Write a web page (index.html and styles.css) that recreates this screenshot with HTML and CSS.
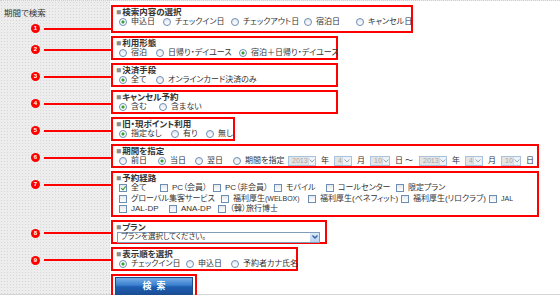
FILE: index.html
```html
<!DOCTYPE html>
<html>
<head>
<meta charset="utf-8">
<title>期間で検索</title>
<link rel="stylesheet" href="styles.css">
</head>
<body>
<div class="page">

    <div class="row">
        <div class="side side-first">
            <h2 class="side-title">期間で検索</h2>
            <span class="mark"><i>1</i></span>
        </div>
        <div class="box w-1">
            <p class="box-title">検索内容の選択</p>
            <div class="opts cols-kind">
                <label class="opt"><input type="radio" name="kind" checked>申込日</label>
                <label class="opt"><input type="radio" name="kind">チェックイン日</label>
                <label class="opt"><input type="radio" name="kind">チェックアウト日</label>
                <label class="opt"><input type="radio" name="kind">宿泊日</label>
                <label class="opt"><input type="radio" name="kind">キャンセル日</label>
            </div>
        </div>
    </div>

    <div class="row">
        <div class="side"><span class="mark"><i>2</i></span></div>
        <div class="box w-2">
            <p class="box-title">利用形態</p>
            <div class="opts cols-use">
                <label class="opt"><input type="radio" name="use">宿泊</label>
                <label class="opt"><input type="radio" name="use">日帰り・デイユース</label>
                <label class="opt"><input type="radio" name="use" checked>宿泊＋日帰り・デイユース</label>
            </div>
        </div>
    </div>

    <div class="row">
        <div class="side"><span class="mark"><i>3</i></span></div>
        <div class="box w-2">
            <p class="box-title">決済手段</p>
            <div class="opts cols-pay">
                <label class="opt"><input type="radio" name="pay" checked>全て</label>
                <label class="opt"><input type="radio" name="pay">オンラインカード決済のみ</label>
            </div>
        </div>
    </div>

    <div class="row">
        <div class="side"><span class="mark"><i>4</i></span></div>
        <div class="box w-2">
            <p class="box-title">キャンセル予約</p>
            <div class="opts cols-cancel">
                <label class="opt"><input type="radio" name="cancel" checked>含む</label>
                <label class="opt"><input type="radio" name="cancel">含まない</label>
            </div>
        </div>
    </div>

    <div class="row">
        <div class="side"><span class="mark"><i>5</i></span></div>
        <div class="box w-5">
            <p class="box-title">旧・現ポイント利用</p>
            <div class="opts cols-point">
                <label class="opt"><input type="radio" name="point" checked>指定なし</label>
                <label class="opt"><input type="radio" name="point">有り</label>
                <label class="opt"><input type="radio" name="point">無し</label>
            </div>
        </div>
    </div>

    <div class="row">
        <div class="side"><span class="mark"><i>6</i></span></div>
        <div class="box w-wide">
            <p class="box-title">期間を指定</p>
            <div class="opts cols-term">
                <label class="opt"><input type="radio" name="term">前日</label>
                <label class="opt"><input type="radio" name="term" checked>当日</label>
                <label class="opt"><input type="radio" name="term">翌日</label>
                <label class="opt"><input type="radio" name="term">期間を指定</label>
                <div class="dates">
                    <span class="sel sel-year">2013<span class="arr"><svg width="6" height="4" viewBox="0 0 6 4"><path d="M0.5 0.5 3 3 5.5 0.5" fill="none" stroke="#9aa" stroke-width="1"/></svg></span></span><span class="unit">年</span>
                    <span class="sel sel-month">4<span class="arr"><svg width="6" height="4" viewBox="0 0 6 4"><path d="M0.5 0.5 3 3 5.5 0.5" fill="none" stroke="#9aa" stroke-width="1"/></svg></span></span><span class="unit">月</span>
                    <span class="sel sel-day">10<span class="arr"><svg width="6" height="4" viewBox="0 0 6 4"><path d="M0.5 0.5 3 3 5.5 0.5" fill="none" stroke="#9aa" stroke-width="1"/></svg></span></span><span class="unit unit-day">日</span>
                    <span class="unit tilde">～</span>
                    <span class="sel sel-year">2013<span class="arr"><svg width="6" height="4" viewBox="0 0 6 4"><path d="M0.5 0.5 3 3 5.5 0.5" fill="none" stroke="#9aa" stroke-width="1"/></svg></span></span><span class="unit">年</span>
                    <span class="sel sel-month">4<span class="arr"><svg width="6" height="4" viewBox="0 0 6 4"><path d="M0.5 0.5 3 3 5.5 0.5" fill="none" stroke="#9aa" stroke-width="1"/></svg></span></span><span class="unit">月</span>
                    <span class="sel sel-day">10<span class="arr"><svg width="6" height="4" viewBox="0 0 6 4"><path d="M0.5 0.5 3 3 5.5 0.5" fill="none" stroke="#9aa" stroke-width="1"/></svg></span></span><span class="unit unit-day">日</span>
                </div>
            </div>
        </div>
    </div>

    <div class="row">
        <div class="side"><span class="mark"><i>7</i></span></div>
        <div class="box w-wide box-route">
            <p class="box-title">予約経路</p>
            <div class="opts cols-route1">
                <label class="opt"><input type="checkbox" checked>全て</label>
                <label class="opt"><input type="checkbox">PC（会員）</label>
                <label class="opt"><input type="checkbox">PC（非会員）</label>
                <label class="opt"><input type="checkbox">モバイル</label>
                <label class="opt"><input type="checkbox">コールセンター</label>
                <label class="opt"><input type="checkbox">限定プラン</label>
            </div>
            <div class="opts cols-route2">
                <label class="opt"><input type="checkbox">グローバル集客サービス</label>
                <label class="opt"><input type="checkbox">福利厚生<span class="small">(WELBOX)</span></label>
                <label class="opt"><input type="checkbox">福利厚生(ベネフィット)</label>
                <label class="opt"><input type="checkbox">福利厚生(リロクラブ)</label>
                <label class="opt"><input type="checkbox"><span class="small">JAL</span></label>
            </div>
            <div class="opts cols-route3">
                <label class="opt"><input type="checkbox">JAL-DP</label>
                <label class="opt"><input type="checkbox">ANA-DP</label>
                <label class="opt"><input type="checkbox">（韓）旅行博士</label>
            </div>
        </div>
    </div>

    <div class="row">
        <div class="side"><span class="mark"><i>8</i></span></div>
        <div class="box w-8">
            <p class="box-title">プラン</p>
            <div class="opts">
                <span class="plan">プランを選択してください。<span class="plan-arr"><svg width="6" height="4" viewBox="0 0 6 4"><path d="M0.5 0.5 3 3 5.5 0.5" fill="none" stroke="#2b5fa8" stroke-width="1.3"/></svg></span></span>
            </div>
        </div>
    </div>

    <div class="row">
        <div class="side"><span class="mark"><i>9</i></span></div>
        <div class="box w-9">
            <p class="box-title">表示順を選択</p>
            <div class="opts cols-order">
                <label class="opt"><input type="radio" name="order" checked>チェックイン日</label>
                <label class="opt"><input type="radio" name="order">申込日</label>
                <label class="opt"><input type="radio" name="order">予約者カナ氏名</label>
            </div>
        </div>
    </div>

    <div class="row">
        <div class="side"></div>
        <div class="box box-btn">
            <button class="btn-search">検索</button>
        </div>
    </div>

</div>
</body>
</html>
```

FILE: styles.css
```css
html, body {
    margin: 0;
    padding: 0;
    background-color: #fff;
}

body {
    font-family: "Liberation Sans", "Noto Sans CJK JP", sans-serif;
    font-size: 8px;
    line-height: 10px;
    color: #333;
    font-feature-settings: "palt";
}

/* 左の灰色の列は点模様、右側は白で覆う */
.page {
    height: 289px;
    padding-top: 4px;
    border-top: 1px dotted #d0d0d0;
    border-bottom: 1px solid #d4d4d4;
    background-color: #ededed;
    background-image:
        linear-gradient(to right, transparent 0, transparent 110px, #fff 110px),
        radial-gradient(circle, #d6d6d6 0.6px, transparent 0.9px);
    background-size: 100% 100%, 3px 3px;
    background-repeat: no-repeat, repeat;
}

.row {
    display: flex;
    margin-bottom: 3px;
}

.side {
    width: 111px;
    flex: none;
    display: flex;
    flex-direction: column;
}

.side-title {
    margin: 3px 0 0 4px;
    font-size: 8.5px;
    line-height: 10px;
    font-weight: normal;
    color: #333;
}

.mark {
    display: flex;
    align-items: center;
    margin-top: 9px;
    padding-left: 31px;
}

.side-first .mark {
    margin-top: 6px;
}

.mark i {
    width: 9px;
    height: 9px;
    border-radius: 50%;
    background-color: #f00;
    color: #fff;
    font-style: normal;
    font-weight: bold;
    font-size: 6px;
    line-height: 9px;
    text-align: center;
}

.mark::after {
    content: "";
    flex: 1;
    height: 2px;
    margin-left: 4px;
    background-color: #f00;
}

.box {
    box-sizing: border-box;
    border: 2px solid #f00;
    padding: 0 4px 0 3px;
}

.w-1 { width: 302px; }
.w-2 { width: 227px; }
.w-5 { width: 124px; }
.w-wide { width: 428px; }
.w-8 { width: 216px; }
.w-9 { width: 187px; }

.box-title {
    margin: 0;
    height: 10px;
    line-height: 10px;
    font-size: 8.5px;
    font-weight: bold;
    white-space: nowrap;
}

.box-title::before {
    content: "■";
    color: #8c8c8c;
    margin-right: 1px;
}

/* 選択肢の行：列幅は箱ごとに指定 */
.opts {
    display: grid;
    grid-auto-flow: column;
    justify-content: start;
    align-items: center;
    height: 10px;
    padding-left: 3px;
    white-space: nowrap;
}

.cols-kind { grid-template-columns: 44px 68px 73px 52px auto; }
.cols-use { grid-template-columns: 37px 83px auto; }
.cols-pay { grid-template-columns: 37px auto; }
.cols-cancel { grid-template-columns: 40px auto; }
.cols-point { grid-template-columns: 52px 35px auto; }
.cols-term { grid-template-columns: 39px 37px 38px 52px auto; }
.cols-route1 { grid-template-columns: 41px 53px 61px 52px 70px auto; }
.cols-route2 { grid-template-columns: 102px 87px 93px 88px auto; }
.cols-route3 { grid-template-columns: 50px 49px auto; }
.cols-order { grid-template-columns: 67px 45px auto; }

.box-route .opts {
    height: 10.5px;
}

.opt {
    display: flex;
    align-items: center;
}

.small {
    font-size: 7px;
}

.opt input {
    appearance: none;
    -webkit-appearance: none;
    width: 8px;
    height: 8px;
    margin: 0 4px 0 0;
    border: 1px solid #6d8db3;
    background: linear-gradient(#e4e8ee, #fff);
    box-sizing: border-box;
    position: relative;
    flex: none;
}

.opt input[type="radio"] {
    border-radius: 50%;
}

.opt input[type="radio"]:checked {
    background: radial-gradient(circle, #2fa22f 0, #2fa22f 1.3px, #fff 1.8px);
}

.opt input[type="checkbox"]:checked::after {
    content: "";
    position: absolute;
    left: 2px;
    top: 0;
    width: 2px;
    height: 4px;
    border-right: 1.5px solid #2c9a2c;
    border-bottom: 1.5px solid #2c9a2c;
    transform: rotate(40deg);
}

.dates {
    display: flex;
    align-items: center;
    margin-left: 3px;
}

.sel {
    display: inline-flex;
    align-items: center;
    justify-content: space-between;
    box-sizing: border-box;
    height: 10px;
    padding-left: 3px;
    border: 1px solid #a9c2dd;
    background-color: #e4e4e4;
    color: #a7a7a7;
    font-size: 7px;
}

.sel-year { width: 28px; }
.sel-month { width: 18px; }
.sel-day { width: 20px; }

.sel .arr {
    display: flex;
    align-items: center;
    justify-content: center;
    width: 8px;
    height: 8px;
    border-left: 1px solid #cfdbe7;
    background-color: #eef2f6;
}

.unit {
    margin: 0 5px 0 5px;
}

.unit-day {
    margin-right: 2px;
}

.tilde {
    margin: 0 6px 0 0;
}

.plan {
    display: flex;
    align-items: center;
    justify-content: space-between;
    box-sizing: border-box;
    width: 203px;
    height: 11px;
    margin-left: -2px;
    padding-left: 3px;
    border: 1px solid #7f9db9;
    background-color: #fff;
    font-size: 7.5px;
}

.plan-arr {
    display: flex;
    align-items: center;
    justify-content: center;
    width: 9px;
    height: 9px;
    background: linear-gradient(#dbe8f7, #bcd3ef);
}

.box-btn {
    width: 86px;
    padding: 1px 2px;
}

.btn-search {
    display: block;
    width: 78px;
    height: 18px;
    padding: 0;
    border: 1px solid #1d4c8c;
    background: linear-gradient(#77aee6, #3a7fcf 45%, #1f5eb2 55%, #1a4f98);
    color: #fff;
    font-family: "Liberation Sans", "Noto Sans CJK JP", sans-serif;
    font-size: 9px;
    font-weight: bold;
    letter-spacing: 5px;
    text-indent: 5px;
    cursor: pointer;
}
```
